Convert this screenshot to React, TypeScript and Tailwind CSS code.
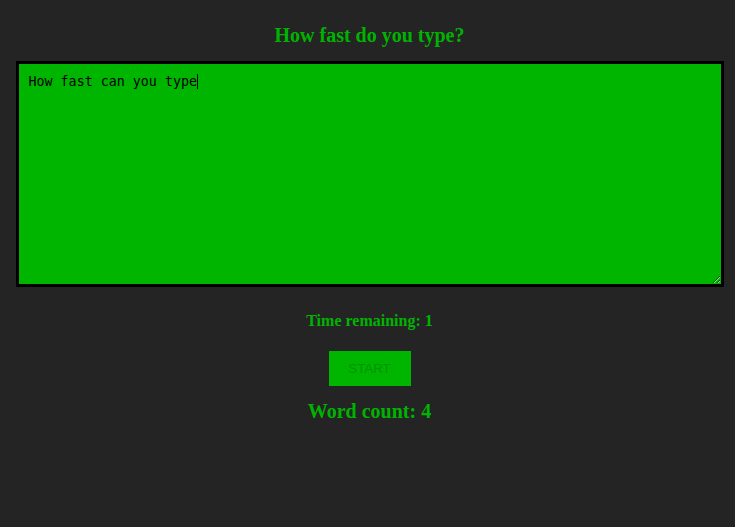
import { useEffect, useRef, useState } from "react";

export default function App() {
  const [text, setText] = useState("How fast can you type");
  const ref = useRef<HTMLTextAreaElement>(null);

  useEffect(() => {
    const el = ref.current;
    if (el) {
      el.focus();
      el.setSelectionRange(el.value.length, el.value.length);
    }
  }, []);

  return (
    <main className="min-h-screen bg-[#242424] font-['Liberation_Serif',serif] text-[#00b300]">
      <div className="flex flex-col items-center pl-[4px] pt-[22px]">
        <h1 className="text-[20px] font-bold leading-[26px]">How fast do you type?</h1>
        <div className="relative mt-[13px]">
          <textarea
            ref={ref}
            value={text}
            onChange={(e) => setText(e.target.value)}
            className="block h-[226px] w-[708px] resize border-[3px] border-black bg-[#00b500] px-[10px] py-[10px] font-['DejaVu_Sans_Mono',monospace] text-[13.33px] leading-[16px] text-black caret-black outline-none"
          />
          {/* caret as in the snapshot */}
          <span className="pointer-events-none absolute left-[181px] top-[13px] h-[15px] w-px bg-black" />
        </div>
        <h4 className="mt-[24px] text-[16px] font-bold leading-[20px]">Time remaining: 1</h4>
        <button
          disabled
          className="mt-[20px] h-[35px] w-[82px] bg-[#00b500] font-['Liberation_Sans',sans-serif] text-[13.33px] text-[#009400]"
        >
          START
        </button>
        <h2 className="mt-[12px] text-[20px] font-bold leading-[26px]">Word count: 4</h2>
      </div>
    </main>
  );
}
